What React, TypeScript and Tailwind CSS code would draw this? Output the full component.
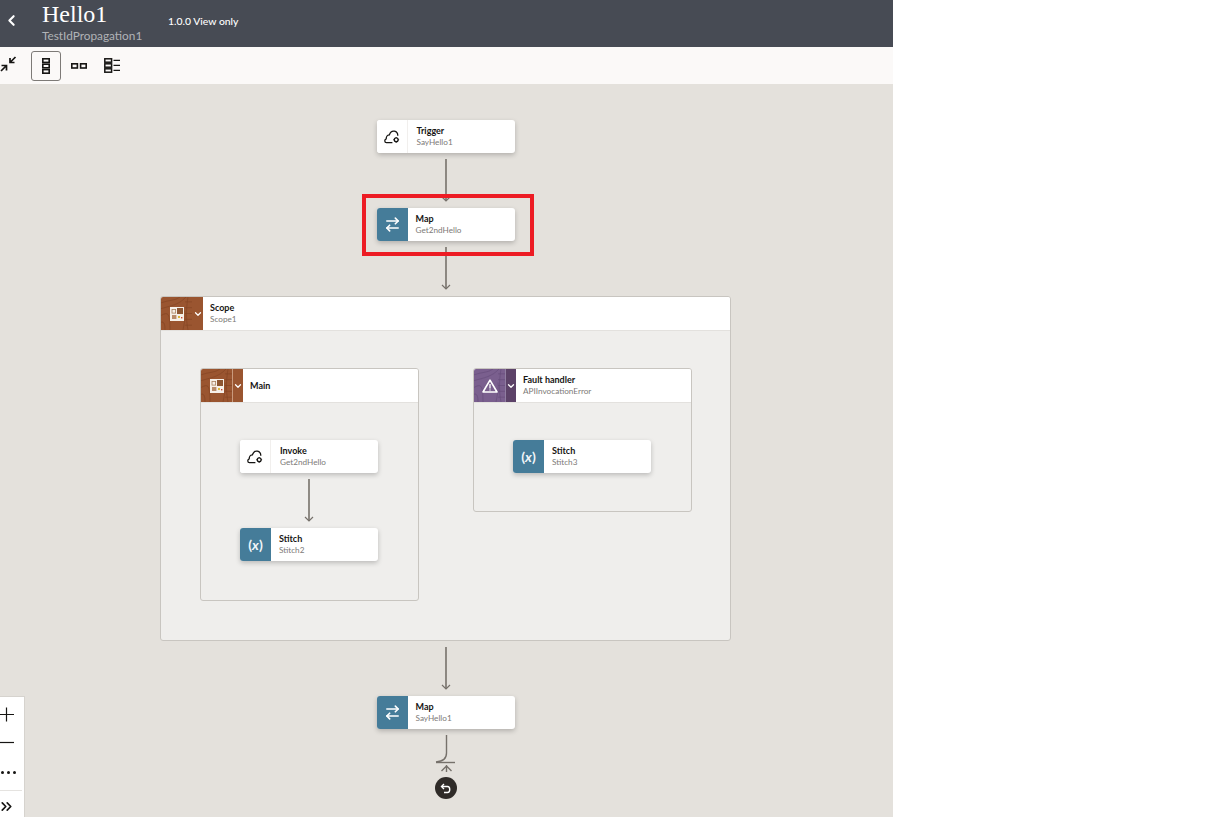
import React from "react";
import { ArrowRightLeft, ChevronDown, ChevronLeft, ChevronsRight } from "lucide-react";

type NodeKind = "cloud" | "map" | "stitch";

function CloudGlyph() {
  return (
    <svg width="16" height="14" viewBox="0 0 16 14" fill="none" stroke="#161513" strokeWidth="1.3">
      <path d="M8.4 12.6H2.4C0.4 12.6 0.2 9.4 2.2 8.8C2.2 6.6 3.8 4.8 5.4 4.8C6.4 2 8.4 0.8 10.4 1.2C12.6 1.6 13.8 3.6 13.8 5.8" />
      <circle cx="12.2" cy="9.8" r="1.9" />
      <path d="M12.2 6.9V7.8M12.2 11.8V12.7M9.3 9.8H10.2M14.2 9.8H15.1" strokeWidth="1.1" />
    </svg>
  );
}

function NodeCard({ kind, title, sub }: { kind: NodeKind; title: string; sub: string }) {
  const isCloud = kind === "cloud";
  return (
    <div className="flex h-[33px] w-[138px] shrink-0 overflow-hidden rounded-[3px] bg-white shadow-[0_2px_5px_rgba(0,0,0,0.22)]">
      <div
        className={`flex w-[31px] shrink-0 items-center justify-center ${
          isCloud ? "border-r border-[#f1efed] bg-white" : "bg-[#457c99] text-white"
        }`}
      >
        {kind === "cloud" && <CloudGlyph />}
        {kind === "map" && <ArrowRightLeft size={17} strokeWidth={2.3} />}
        {kind === "stitch" && (
          <span className="text-[14px] font-bold leading-none text-[#f1f5f8]">
            (<span className="italic">x</span>)
          </span>
        )}
      </div>
      <div className={`flex flex-col justify-center ${isCloud ? "pl-[9px]" : "pl-[8px]"}`}>
        <div className="text-[9px] font-bold leading-[12px] text-[#161513]">{title}</div>
        <div className="text-[8.2px] leading-[11px] text-[#7d7a77]">{sub}</div>
      </div>
    </div>
  );
}

function Arrow() {
  return (
    <svg width="12" height="43" viewBox="0 0 12 43" className="my-[6px] block shrink-0" fill="none" stroke="#76716b">
      <path d="M6 0V42" strokeWidth="1.6" />
      <path d="M2 38L6 42L10 38" strokeWidth="1.2" />
    </svg>
  );
}

function Texture({ color }: { color: string }) {
  return (
    <svg className="absolute inset-0 h-full w-full" viewBox="0 0 31 34" preserveAspectRatio="none" fill="none" stroke={color} strokeWidth="0.6">
      <path d="M0 6C8 3 14 4 19 0" />
      <path d="M0 12C10 9 18 8 25 0" />
      <path d="M0 19C6 16 9 14 9 34" />
      <path d="M0 26C3 25 4 28 4 34" />
      <path d="M27 0C25 12 25 24 27 34" />
      <path d="M24 14C25 20 23 28 22 34" />
      <path d="M24 5H31M24 11H31M24 17H31M24 23H31M24 29H31" />
    </svg>
  );
}

function ScopeGlyph() {
  return (
    <svg width="14" height="14" viewBox="0 0 14 14" className="relative" fill="none">
      <rect width="14" height="14" fill="#f6f0e9" />
      <rect x="7" y="1" width="6" height="6" fill="#8d5632" />
      <rect x="2" y="2.5" width="3.6" height="3.6" stroke="#a8805f" strokeWidth="0.8" />
      <rect x="2" y="8" width="4.4" height="4" fill="#b98c6b" />
      <rect x="8" y="9" width="2" height="2" fill="#dcb83f" />
      <rect x="11" y="10" width="1.4" height="1.4" fill="#c8452f" />
    </svg>
  );
}

function WarnGlyph() {
  return (
    <svg width="16" height="14" viewBox="0 0 16 14" className="relative" fill="none">
      <path d="M8 1.2L15 13H1Z" stroke="#fff" strokeWidth="1.6" strokeLinejoin="round" />
      <path d="M8 5V9.4M8 10.4V11.6" stroke="#fff" strokeWidth="1.3" />
    </svg>
  );
}

function ContainerHeader({
  tone,
  title,
  sub,
  divided,
}: {
  tone: "brown" | "purple";
  title: string;
  sub?: string;
  divided?: boolean;
}) {
  const purple = tone === "purple";
  return (
    <div className="flex h-[34px] shrink-0 border-b border-[#e3e1de] bg-white">
      <div className={`relative flex w-[31px] shrink-0 items-center justify-center ${purple ? "bg-[#7a5f8e]" : "bg-[#9a5530]"}`}>
        <Texture color={purple ? "#644a78" : "#824322"} />
        {purple ? <WarnGlyph /> : <ScopeGlyph />}
      </div>
      <div
        className={`flex w-[11px] shrink-0 items-center justify-center text-white ${
          purple ? "border-l border-[#8f7da0] bg-[#5c4268]" : divided ? "border-l border-[#c99a7d] bg-[#9a5530]" : "bg-[#9a5530]"
        }`}
      >
        <ChevronDown size={10} strokeWidth={3} />
      </div>
      <div className="flex flex-col justify-center pl-[7px]">
        <div className="text-[9px] font-bold leading-[12px] text-[#161513]">{title}</div>
        {sub && <div className="text-[8.2px] leading-[11px] text-[#7d7a77]">{sub}</div>}
      </div>
    </div>
  );
}

function ToolGlyph({ kind }: { kind: "vertical" | "horizontal" | "list" }) {
  if (kind === "vertical") {
    return (
      <svg width="8" height="16" viewBox="0 0 8 16" fill="none" stroke="#161513" strokeWidth="1.6">
        <rect x="0.8" y="0.8" width="6.4" height="3.6" />
        <rect x="0.8" y="6.2" width="6.4" height="3.6" />
        <rect x="0.8" y="11.6" width="6.4" height="3.6" />
      </svg>
    );
  }
  if (kind === "horizontal") {
    return (
      <svg width="16" height="6" viewBox="0 0 16 6" fill="none" stroke="#161513" strokeWidth="1.6">
        <rect x="0.8" y="0.8" width="5.6" height="4.2" />
        <rect x="9.6" y="0.8" width="5.6" height="4.2" />
      </svg>
    );
  }
  return (
    <svg width="16" height="15" viewBox="0 0 16 15" fill="none" stroke="#161513" strokeWidth="1.5">
      <rect x="0.8" y="0.8" width="6.8" height="3.4" />
      <rect x="0.8" y="5.8" width="6.8" height="3.4" />
      <rect x="0.8" y="10.8" width="6.8" height="3.4" />
      <path d="M9.5 2.4H16M9.5 7.4H16M9.5 12.4H16" strokeWidth="1.2" />
    </svg>
  );
}

function ZoomPanel() {
  return (
    <div className="absolute bottom-0 left-0 h-[121px] w-[25px] border-r border-t border-[#d6d3ce] bg-white text-[#161513]">
      <div className="flex h-[93px] flex-col items-start">
        <svg width="15" height="37" viewBox="0 0 15 37" className="mt-[10px]" fill="none" stroke="#161513" strokeWidth="1.2">
          <path d="M0 7.5H14M6.5 0.5V14.5" />
          <path d="M0 35.5H14" />
        </svg>
        <div className="mt-[27px] flex gap-[3px] pl-[1px]">
          <span className="h-[3px] w-[3px] rounded-full bg-[#161513]" />
          <span className="h-[3px] w-[3px] rounded-full bg-[#161513]" />
          <span className="h-[3px] w-[3px] rounded-full bg-[#161513]" />
        </div>
      </div>
      <div className="w-[22px] border-t border-[#e5e3e0]" />
      <ChevronsRight size={17} strokeWidth={2.4} className="mt-[7px] -ml-[2px]" />
    </div>
  );
}

export default function App() {
  return (
    <div className="flex h-[817px] w-[1226px] overflow-hidden bg-white font-['Lato','Noto_Sans',sans-serif]">
      <div className="relative flex w-[893px] shrink-0 flex-col overflow-hidden">
        <header className="flex h-[47px] shrink-0 bg-[#474b54] text-white">
          <div className="flex w-[42px] shrink-0 items-center pl-[3px] pb-[6px]">
            <ChevronLeft size={17} strokeWidth={3} />
          </div>
          <div className="w-[126px] shrink-0">
            <div className="font-['Liberation_Serif',serif] text-[24px] leading-[28px]">Hello1</div>
            <div className="text-[11.8px] leading-[16px] text-[#b1b3b7]">TestIdPropagation1</div>
          </div>
          <div className="pt-[14px] text-[10.4px] font-medium leading-[14px]">1.0.0 View only</div>
        </header>

        <div className="flex h-[37px] shrink-0 items-center bg-[#fbf9f8]">
          <svg width="17" height="16" viewBox="0 0 17 16" className="shrink-0 -translate-y-[2px]" fill="none" stroke="#161513" strokeWidth="1.7">
            <path d="M15.5 1L10 6.5M10 2V6.5H14.5" />
            <path d="M1 15L6.5 9.5M1.5 9.5H6.5V14.5" />
          </svg>
          <button className="ml-[14px] flex h-[30px] w-[30px] items-center justify-center rounded-[3px] border border-[#7d7a77]">
            <ToolGlyph kind="vertical" />
          </button>
          <div className="flex w-[36px] justify-center">
            <ToolGlyph kind="horizontal" />
          </div>
          <div className="flex w-[30px] justify-center">
            <ToolGlyph kind="list" />
          </div>
        </div>

        <main className="relative flex flex-1 flex-col items-center bg-[#e4e1dc] pr-[2px] pt-[36px]">
          <NodeCard kind="cloud" title="Trigger" sub="SayHello1" />
          <Arrow />
          <NodeCard kind="map" title="Map" sub="Get2ndHello" />
          <Arrow />

          <section className="flex h-[345px] w-[571px] shrink-0 flex-col overflow-hidden rounded-[3px] border border-[#c8c5c0] bg-[#efeeec]">
            <ContainerHeader tone="brown" title="Scope" sub="Scope1" />
            <div className="flex items-start gap-[54px] pl-[39px] pt-[37px]">
              <div className="flex h-[233px] w-[219px] flex-col overflow-hidden rounded-[3px] border border-[#c8c5c0] bg-[#efeeec]">
                <ContainerHeader tone="brown" title="Main" divided />
                <div className="flex flex-col items-center pr-[1px] pt-[37px]">
                  <NodeCard kind="cloud" title="Invoke" sub="Get2ndHello" />
                  <Arrow />
                  <NodeCard kind="stitch" title="Stitch" sub="Stitch2" />
                </div>
              </div>
              <div className="flex h-[144px] w-[219px] flex-col overflow-hidden rounded-[3px] border border-[#c8c5c0] bg-[#efeeec]">
                <ContainerHeader tone="purple" title="Fault handler" sub="APIInvocationError" />
                <div className="flex flex-col items-center pr-[1px] pt-[37px]">
                  <NodeCard kind="stitch" title="Stitch" sub="Stitch3" />
                </div>
              </div>
            </div>
          </section>

          <Arrow />
          <NodeCard kind="map" title="Map" sub="SayHello1" />

          <svg width="24" height="42" viewBox="0 0 24 42" className="mt-[6px] block shrink-0" fill="none" stroke="#76716b" strokeWidth="1.4">
            <path d="M12.5 0V18C12.5 24 9 26 2 27" />
            <path d="M2 27.5H21" />
            <path d="M12.5 30V37M7.5 36L12.5 31L17.5 36" strokeWidth="1.4" />
          </svg>
          <div className="flex h-[22px] w-[22px] shrink-0 items-center justify-center rounded-full bg-[#2f2b28]">
            <svg width="12" height="11" viewBox="0 0 12 11" fill="none" stroke="#fff" strokeWidth="1.4">
              <path d="M4 1L1.5 3.5L4 6" />
              <path d="M2 3.5H7.5C10.5 3.5 10.5 9.5 7.5 9.5H4" />
            </svg>
          </div>

          <ZoomPanel />
        </main>

        {/* highlight drawn on top of the flow */}
        <div className="absolute left-[362px] top-[194px] h-[62px] w-[172px] border-[4px] border-[#ed1c24]" />
      </div>
    </div>
  );
}
